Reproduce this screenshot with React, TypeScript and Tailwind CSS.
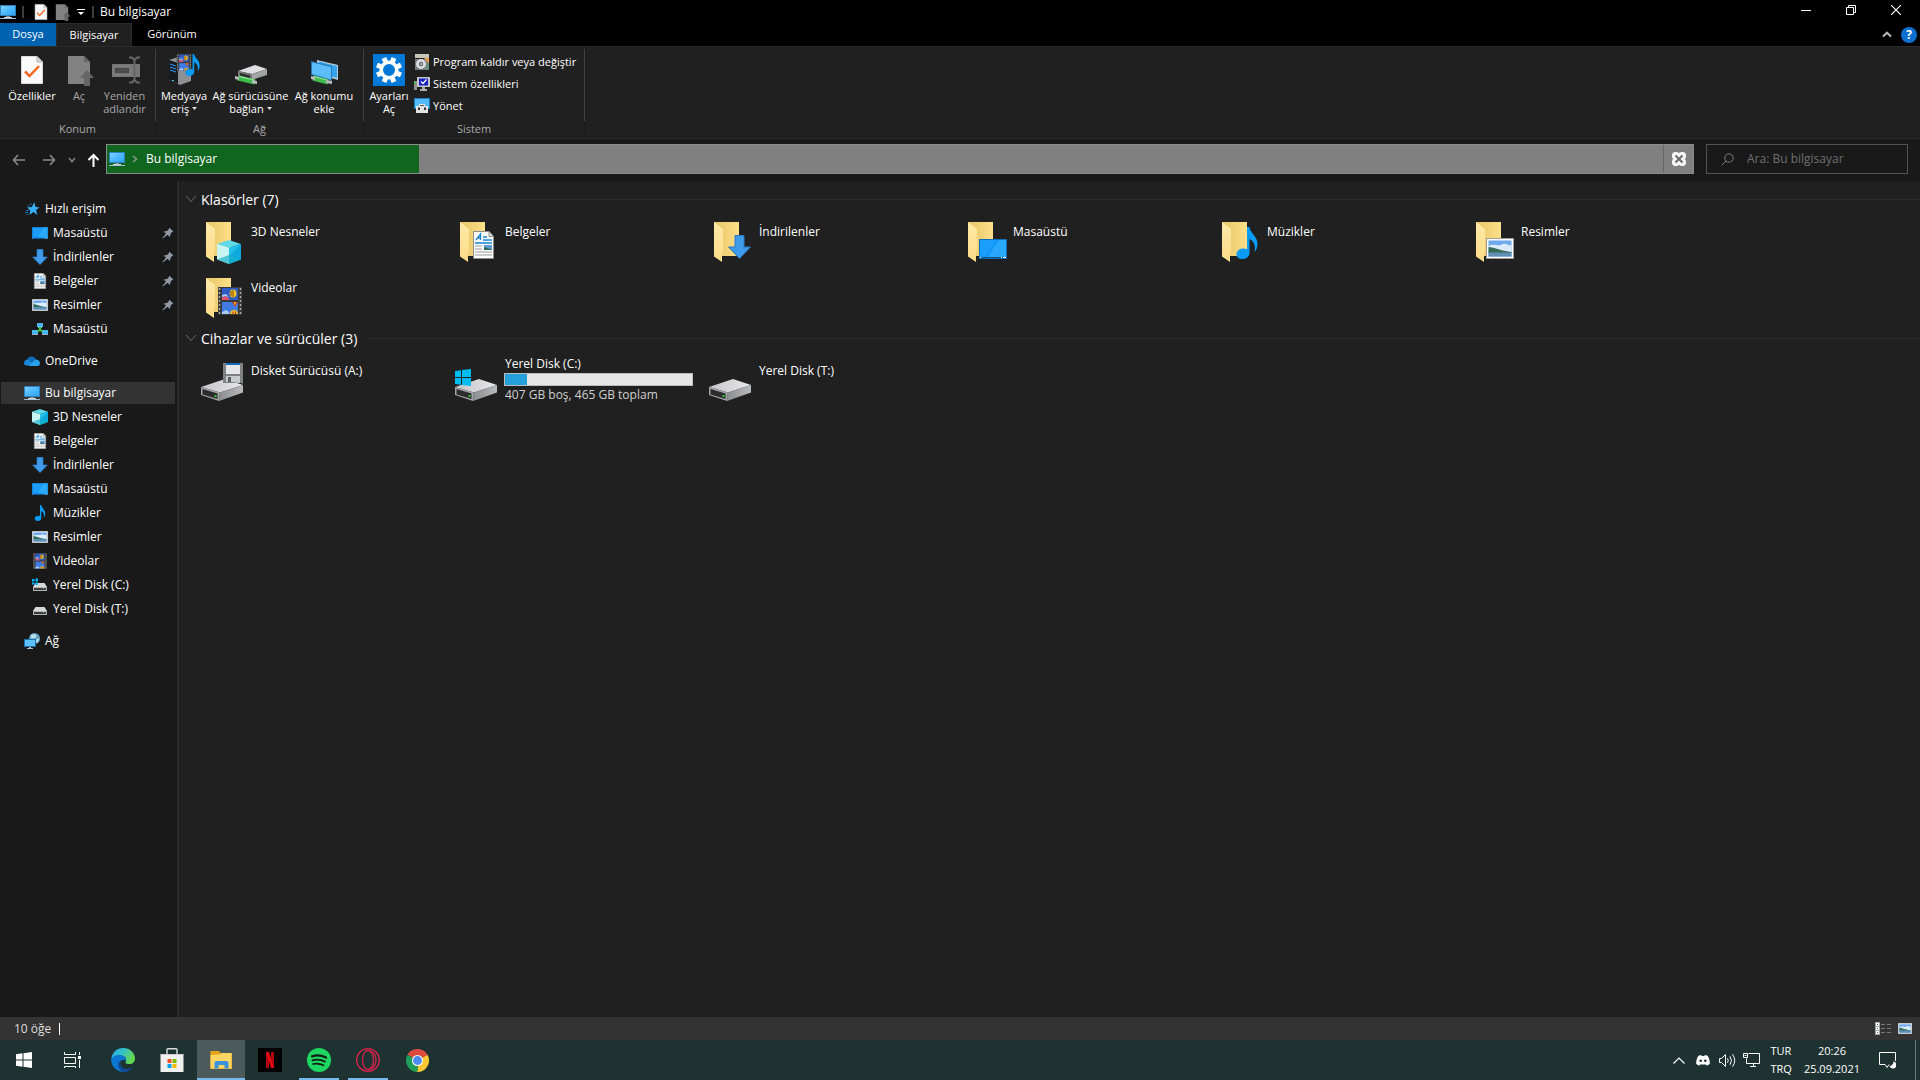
import type { ReactNode } from 'react'

type IconProps = { className?: string; x?: number; y?: number; width?: number; height?: number }

function PcIcon(p: IconProps) {
  return (
    <svg viewBox="0 0 16 16" {...p}>
      <defs>
        <linearGradient id="pc" x1="0" y1="0" x2="1" y2="1">
          <stop offset="0" stopColor="#7fd0ff" />
          <stop offset="0.5" stopColor="#4db8fd" />
          <stop offset="1" stopColor="#2ba6f5" />
        </linearGradient>
      </defs>
      <rect x="0" y="1" width="16" height="11" fill="#2f80b8" />
      <rect x="1" y="2" width="14" height="9" fill="url(#pc)" />
      <rect x="6" y="12" width="4" height="2" fill="#7c8b96" />
      <rect x="0" y="14" width="16" height="1" fill="#a9bccb" />
      <rect x="4" y="13" width="8" height="1" fill="#cfd8df" />
    </svg>
  )
}

function CubeIcon(p: IconProps) {
  return (
    <svg viewBox="0 0 24 24" {...p}>
      <path d="M12 0 24 4 12 8 0 4Z" fill="#5fd8e8" />
      <path d="M0 4 12 8V24L0 19.500Z" fill="#c9f4f4" />
      <path d="M24 4 12 8V24L24 19.500Z" fill="#0ea9dc" />
      <path d="M24 4 12 8V16Z" fill="#22bfe6" />
      <path d="M12 15 24 19.500 12 24 0 19.500Z" fill="#19b5cc" fillOpacity="0.7" />
    </svg>
  )
}

function DocIcon(p: IconProps) {
  return (
    <svg viewBox="0 0 21 28" {...p}>
      <path d="M0.500 0.500H16L20.500 5.500V27.500H0.500Z" fill="#fcfcfc" stroke="#8d8d8d" />
      <path d="M16 0.500V5.500H20.500" fill="#dcdcdc" stroke="#8d8d8d" />
      <path d="M3 9 7.500 3V9M4.500 7H7.500M10 6H14M10 9H19" fill="none" stroke="#1a86d0" strokeWidth="1.300" />
      <path d="M2 12H19" stroke="#1a86d0" strokeWidth="1.500" />
      <rect x="11" y="14" width="8" height="5" fill="#5f9bd0" />
      <path d="M11 16 19 18.500V19H11Z" fill="#2f6a55" />
      <path d="M2 15H9M2 18H9M2 21H19M2 24H19" stroke="#9c9c9c" />
    </svg>
  )
}

function DownIcon(p: IconProps) {
  return (
    <svg viewBox="0 0 23 24" {...p}>
      <path d="M7 0.500H16V12H22.500L11.500 23.500 0.500 12H7Z" fill="#3d9bea" stroke="#2a78c4" />
    </svg>
  )
}

function DesktopIcon(p: IconProps) {
  return (
    <svg viewBox="0 0 28 20" preserveAspectRatio="none" {...p}>
      <rect width="28" height="20" fill="#0b6fbd" />
      <rect x="1" y="1" width="26" height="17" fill="#1a9dfb" />
      <path d="M18 1H27V18H10Z" fill="#2aa8fc" />
      <path d="M18 1H20L8 18H6Z" fill="#0f97fa" />
      <rect x="1" y="18" width="26" height="1" fill="#0a4f86" />
      <path d="M1 18.500H2M22 18.500H23M24 18.500H27" stroke="#fff" />
    </svg>
  )
}

function NoteIcon(p: IconProps) {
  return (
    <svg viewBox="0 0 22 32" {...p}>
      <path
        d="M11 0H13.500C14 6 21.500 9 21.500 17C21.500 20 20.500 23 18.500 25C20 18 17.500 14 13.500 12V26C13.500 29.500 10.500 32 6.500 32C2.500 32 0.500 30 0.500 27C0.500 23.500 4 21.500 7.500 21.500C9 21.500 10.200 21.800 11 22.300Z"
        fill="#0a9bf5"
      />
    </svg>
  )
}

function PictureIcon(p: IconProps) {
  return (
    <svg viewBox="0 0 28 21" preserveAspectRatio="none" {...p}>
      <rect width="28" height="21" fill="#9b9b9b" />
      <rect x="1" y="1" width="26" height="19" fill="#fdfdfd" />
      <rect x="2.500" y="2.500" width="23" height="16" fill="#6fa8ee" />
      <path d="M2.500 8C8 5 12 9 17 6 20 5 23 8 25.500 7V14H2.500Z" fill="#dcebfa" />
      <path d="M2.500 9C7 9 12 12 25.500 14V15H2.500Z" fill="#356b57" />
      <path d="M2.500 14.500H25.500V18.500H2.500Z" fill="#5f8fb4" />
    </svg>
  )
}

function FilmIcon(p: IconProps) {
  return (
    <svg viewBox="0 0 24 28" {...p}>
      <rect width="24" height="28" fill="#3a3a3a" />
      <path d="M1.500 1V27M22.500 1V27" stroke="#a9a9a9" strokeWidth="1.500" strokeDasharray="2 2" />
      <rect x="4" y="1" width="16" height="12" fill="#2f5cc4" />
      <rect x="4" y="15" width="16" height="12" fill="#3f7be0" />
      <path d="M4 10 7 9 11 11V13H4Z" fill="#e2526a" />
      <path d="M4 8 8 7 11 10 7 9 4 10Z" fill="#a9cbf6" />
      <ellipse cx="15" cy="6.500" rx="3.500" ry="4" fill="#f2c01f" />
      <path d="M15 3V10M13 4V9" stroke="#7d4a1c" />
      <path d="M14 15H20L17 20Z" fill="#c23a28" />
      <path d="M16 15H18L17 19Z" fill="#f2c01f" />
      <path d="M4 25 8 23 11 25V27H4Z" fill="#a9cbf6" />
      <path d="M12 27A4 4 0 0 1 20 27Z" fill="#f2c01f" />
      <path d="M15 24.500V27M17.500 24.500V27" stroke="#b5271f" />
    </svg>
  )
}

function SmallDriveIcon({ windows, className }: { windows?: boolean; className?: string }) {
  return (
    <svg viewBox="0 0 16 16" className={className}>
      <path d="M3.500 6H12.500L15 10H1Z" fill="#d9d9d9" />
      <rect x="1" y="10" width="14" height="4" fill="#b5b5b5" />
      <rect x="2" y="11" width="12" height="2" fill="#3c3c3c" />
      <rect x="11" y="11" width="1" height="1" fill="#41e04a" />
      {windows && <path d="M0 2H2.500V4.500H0ZM3.500 1.500H6V4.500H3.500ZM0 5.500H2.500V7.500H0ZM3.500 5.500H6V8H3.500Z" fill="#00b7f1" />}
    </svg>
  )
}

function DriveShape() {
  return (
    <>
      <defs>
        <linearGradient id="dtop" x1="0" y1="0" x2="1" y2="0">
          <stop offset="0" stopColor="#c4c4c7" />
          <stop offset="1" stopColor="#e9e9ec" />
        </linearGradient>
        <linearGradient id="dside" x1="0" y1="0" x2="1" y2="0">
          <stop offset="0" stopColor="#8c8d8f" />
          <stop offset="1" stopColor="#b9babc" />
        </linearGradient>
      </defs>
      <path d="M1 30 25 22 43 28 20 35.500Z" fill="url(#dtop)" />
      <path d="M20 35.500 43 28V35.500L19 44Z" fill="url(#dside)" />
      <path d="M1 30 20 35.500 19 44 1 38Z" fill="#a3a4a6" />
      <path d="M2.500 32 17.500 36.500V42L2.500 37.500Z" fill="#2b2b2b" />
      <rect x="14.500" y="38" width="2" height="2" fill="#2fd03a" />
    </>
  )
}

function DriveIcon({ children }: { children?: ReactNode }) {
  return (
    <svg viewBox="0 0 48 48" className="h-12 w-12 shrink-0">
      <DriveShape />
      {children}
    </svg>
  )
}

function FolderIcon({ children }: { children?: ReactNode }) {
  return (
    <svg viewBox="0 0 48 48" className="h-12 w-12 shrink-0">
      <defs>
        <linearGradient id="fback" x1="0" y1="0" x2="1" y2="0">
          <stop offset="0" stopColor="#e8c567" />
          <stop offset="1" stopColor="#fee089" />
        </linearGradient>
        <linearGradient id="ffront" x1="0" y1="0" x2="0" y2="1">
          <stop offset="0" stopColor="#ffeaa8" />
          <stop offset="1" stopColor="#fcdb86" />
        </linearGradient>
      </defs>
      <path d="M6 4H31V38H12Z" fill="url(#fback)" />
      <path d="M6 4 15 11V33L14 35V44L6 38.500Z" fill="url(#ffront)" />
      {children}
    </svg>
  )
}

function FloppyDriveIcon() {
  return (
    <DriveIcon>
      <path d="M23 6H43V27L41 26H23Z" fill="#7f8184" />
      <rect x="26" y="6" width="14" height="2" fill="#1368b8" />
      <rect x="26" y="8" width="14" height="9" fill="#e7e7ea" />
      <path d="M26 19H40V26L33 25H26Z" fill="#c9cacd" />
      <rect x="28" y="20" width="3" height="5" fill="#5b5d60" />
    </DriveIcon>
  )
}

function SystemDriveIcon() {
  return (
    <DriveIcon>
      <path d="M1 14 7 13.200V20H1ZM8 13 17 12V20H8ZM1 21H7V27.800L1 27ZM8 21H17V29L8 28Z" fill="#00bcf2" />
    </DriveIcon>
  )
}

function StarIcon() {
  return (
    <svg viewBox="0 0 16 16" className="h-4 w-4">
      <path d="M10.500 1 11.300 5.800 15.500 6.500 12 9 13.500 14 9.300 11 5.500 14 6.300 9.500 3 6.500 7.800 6Z" fill="#38b0f7" />
      <path d="M6 3H8M3.500 5H6M2 9.500H5M1 11.500H4.500M2.500 13.500H4" stroke="#1d6ea8" />
    </svg>
  )
}

function NetFolderIcon() {
  return (
    <svg viewBox="0 0 16 16" className="h-4 w-4">
      <rect x="5" y="2" width="6" height="4" fill="#4db4f2" />
      <rect x="0" y="9" width="6" height="4" fill="#4db4f2" />
      <rect x="10" y="9" width="6" height="4" fill="#4db4f2" />
      <path d="M7 6H9V8L11 10 10 11.500 8 10 6 11.500 5 10 7 8Z" fill="#3cc24a" />
      <path d="M0 13.500H6M10 13.500H16M6 6.500H7M9 6.500H10" stroke="#9fb5c6" />
    </svg>
  )
}

function CloudIcon() {
  return (
    <svg viewBox="0 0 16 16" className="h-4 w-4">
      <path d="M3 6.500A5 5 0 0 1 12 6L8 11H2Z" fill="#0f6cbd" />
      <path d="M0 10.500C0 8 1.500 6.500 4 6.500L11 12.500H2.500C1 12.500 0 11.800 0 10.500Z" fill="#1a86dc" />
      <path d="M5 12.800 11.500 6.500C14.500 6.500 16 8.500 16 10.200C16 12 15 13 13.500 13H4Z" fill="#27a1ec" />
    </svg>
  )
}

function NetworkIcon() {
  return (
    <svg viewBox="0 0 16 16" className="h-4 w-4">
      <circle cx="10.500" cy="5.500" r="5.500" fill="#5fa3c4" />
      <path d="M7 2C9 0 12 1 12.500 3S9 6 7 5ZM12.500 6 15.500 5.500 14 9 12 9.500Z" fill="#b9e0ee" />
      <rect x="0" y="6" width="12" height="8" fill="#1f6fa8" />
      <rect x="1" y="7" width="10" height="6" fill="#5cc0ff" />
      <path d="M3 15.500H9M5 14.500H7" stroke="#a9bccb" />
    </svg>
  )
}

function PinIcon() {
  return (
    <svg viewBox="0 0 12 12" className="h-3 w-3">
      <path d="M7 0.500 11.500 4.500 10 5 8.500 7 8 10 5.500 7.800 1 11.500 0.500 11 4 6.500 1.500 4.500 5 4 7 2Z" fill="#8f99a3" />
    </svg>
  )
}

function CheckDocIcon({ className }: IconProps) {
  return (
    <svg viewBox="0 0 32 32" className={className}>
      <path d="M5.500 2.500H21L26.500 8V29.500H5.500Z" fill="#fafafa" stroke="#dadada" />
      <path d="M21 2.500V8H26.500" fill="#d5d5d5" stroke="#b4b4b4" />
      <path d="M9 17.500 13.500 22 23 12" fill="none" stroke="#f26522" strokeWidth="2.500" />
    </svg>
  )
}

function GrayDocIcon({ className }: IconProps) {
  return (
    <svg viewBox="0 0 32 32" className={className}>
      <path d="M5 2H21L27 8V30H5Z" fill="#828282" />
      <path d="M21 2V8H27" fill="#666" />
      <path d="M24 16 31 24H27V32H21V24H17Z" fill="#666" />
    </svg>
  )
}

function RenameIcon() {
  return (
    <svg viewBox="0 0 32 32" className="h-8 w-8">
      <rect x="3" y="10" width="28" height="13" fill="#767676" />
      <rect x="5" y="13" width="16" height="7" fill="#4c4c4c" stroke="#8e8e8e" />
      <path d="M20 3.500H23L25.500 6 28 3.500H31M25.500 5V27M20 28.500H23L25.500 26 28 28.500H31" fill="none" stroke="#666" strokeWidth="2" />
    </svg>
  )
}

function MediaIcon() {
  return (
    <svg viewBox="0 0 32 32" className="h-8 w-8">
      <path d="M1 6 10 3 23 6V27L12 31 1 26Z" fill="#8e9093" />
      <path d="M1 6 10 9V30L1 26Z" fill="#17191c" />
      <path d="M2 10 8 12M2 13 8 15M2 16 8 18" stroke="#2b8ff0" strokeWidth="1.200" />
      <rect x="4" y="26" width="2" height="1" fill="#39d7f0" />
      <FilmIcon x={8} y={0} width={16} height={17} />
      <NoteIcon x={17} y={0} width={15} height={22} />
    </svg>
  )
}

function NetDriveIcon() {
  return (
    <svg viewBox="0 0 32 32" className="h-8 w-8">
      <path d="M3 17 20 11 32 15 17 20Z" fill="#e0e0e2" />
      <path d="M17 20 32 15V21L17 26Z" fill="#a2a3a5" />
      <path d="M3 17 17 20V26L3 22Z" fill="#77787a" />
      <path d="M5 19 15 21.500V24L5 21.500Z" fill="#2b2b2b" />
      <path d="M3 24 20 28" stroke="#3fba4c" strokeWidth="5" />
      <path d="M4 22.500 19 26" stroke="#93ea9a" />
      <path d="M0 22 4 23V26L0 25ZM17 26 22 27V30L17 29Z" fill="#b9bbbd" />
    </svg>
  )
}

function NetPlaceIcon() {
  return (
    <svg viewBox="0 0 32 32" className="h-8 w-8">
      <path d="M9 6 30 11V26L9 20Z" fill="#b9cddb" />
      <path d="M11 7.500 29 12V24L11 19Z" fill="#35a4ec" />
      <path d="M3 7 24 12V27L3 21Z" fill="#2678b4" />
      <path d="M4 8.500 23 13V25.500L4 20Z" fill="#5cbdfb" />
      <path d="M5 24 20 28" stroke="#3fba4c" strokeWidth="5" />
      <path d="M6 22.500 19 26" stroke="#93ea9a" />
      <path d="M3 22 7 23V26L3 25ZM18 26 24 27V30L18 29Z" fill="#b9bbbd" />
    </svg>
  )
}

function GearIcon() {
  return (
    <svg viewBox="0 0 32 32" className="h-8 w-8">
      <rect width="32" height="32" fill="#0078d7" />
      <circle cx="16" cy="16" r="7.800" fill="none" stroke="#fff" strokeWidth="3.600" />
      <g stroke="#fff" strokeWidth="5">
        <path d="M19.400 7.700 21 4M24.300 12.600 28 11M24.300 19.400 28 21M19.400 24.300 21 28M12.600 24.300 11 28M7.700 19.400 4 21M7.700 12.600 4 11M12.600 7.700 11 4" />
      </g>
    </svg>
  )
}

function UninstallIcon() {
  return (
    <svg viewBox="0 0 16 16" className="h-4 w-4">
      <path d="M1 0H15V4H1Z" fill="#c9c4b8" />
      <path d="M1 5H15V16H1Z" fill="#77787a" />
      <path d="M10 4H15V10Z" fill="#e89a4b" />
      <path d="M11 9H15V16H11Z" fill="#6b8f7c" />
      <circle cx="7" cy="10" r="5" fill="#d9dbde" />
      <circle cx="7" cy="10" r="2" fill="#3b3d40" />
      <circle cx="7" cy="10" r="1" fill="#e8e8e8" />
    </svg>
  )
}

function SystemPropsIcon() {
  return (
    <svg viewBox="0 0 16 16" className="h-4 w-4">
      <rect x="3" y="1" width="13" height="10" fill="#c6c7c9" />
      <rect x="5" y="2.500" width="9" height="7" fill="#1a1fc4" />
      <path d="M7 5.500 9 7.500 12.500 3.500" fill="none" stroke="#fff" strokeWidth="1.300" />
      <path d="M0 5H3V14H0Z" fill="#8f9193" />
      <rect x="0" y="6" width="2" height="2" fill="#3cc24a" />
      <path d="M8 11H11V13H13V15H6V13H8Z" fill="#a9abad" />
    </svg>
  )
}

function ManageIcon() {
  return (
    <svg viewBox="0 0 16 16" className="h-4 w-4">
      <rect y="0" width="16" height="11" fill="#1c7fc4" />
      <rect x="1" y="1" width="14" height="9" fill="#53b9f9" />
      <path d="M5 6H11V8H14V15H2V8H5Z" fill="#e3e3e3" />
      <rect x="6" y="7" width="4" height="1" fill="#555" />
      <path d="M4 9.500H6V12H4ZM10 9.500H12V12H10Z" fill="#333" />
    </svg>
  )
}

function RibbonButton({ icon, lines, width, disabled, menu }: {
  icon: ReactNode
  lines: string[]
  width: string
  disabled?: boolean
  menu?: boolean
}) {
  return (
    <button
      disabled={disabled}
      className={`flex flex-col items-center pt-[5px] ${width} ${disabled ? 'text-[#a6a6a6]' : 'text-white'}`}
    >
      {icon}
      <span className="mt-[3px] whitespace-nowrap text-center text-[11px] leading-[13px]">
        {lines.map((line, i) => (
          <span key={line} className="flex items-center justify-center gap-[3px]">
            {line}
            {menu && i === lines.length - 1 && (
              <svg viewBox="0 0 5 3" className="h-[3px] w-[5px]"><path d="M0 0H5L2.500 3Z" fill="#ddd" /></svg>
            )}
          </span>
        ))}
      </span>
    </button>
  )
}

function RibbonGroup({ label, className, children }: { label: string; className: string; children: ReactNode }) {
  return (
    <section className="flex flex-col">
      <div className={`mt-[2px] flex h-[72px] items-start border-r border-[#404040] ${className}`}>
        {children}
      </div>
      <div className="border-r border-[#1a1a1a] text-center text-[11px] leading-4 text-[#a9a9a9]">{label}</div>
    </section>
  )
}

function RibbonLink({ icon, label }: { icon: ReactNode; label: string }) {
  return (
    <button className="flex h-[22px] items-center gap-[3px] whitespace-nowrap">
      {icon}
      {label}
    </button>
  )
}

function TitleBar() {
  return (
    <header className="flex h-[23px] items-center bg-black">
      <PcIcon className="h-4 w-4" />
      <span className="ml-[6px] h-3 w-[2px] bg-[#3c3c3c]" />
      <button className="ml-[8px]" aria-label="Özellikler"><CheckDocIcon className="h-[18px] w-[18px]" /></button>
      <button className="ml-[3px]" aria-label="Yeni klasör"><GrayDocIcon className="h-[18px] w-[18px]" /></button>
      <button className="ml-[6px]" aria-label="Hızlı Erişim Araç Çubuğunu Özelleştir">
        <svg viewBox="0 0 8 8" className="h-2 w-2"><path d="M0 1H8V2H0ZM1 4H7L4 7Z" fill="#fff" /></svg>
      </button>
      <span className="ml-[7px] h-3 w-[2px] bg-[#3c3c3c]" />
      <h1 className="ml-[6px] text-[12px]">Bu bilgisayar</h1>
      <div className="ml-auto flex self-stretch pb-[3px] pr-[2px]">
        <button className="flex w-[45px] items-center justify-center" aria-label="Simge durumuna küçült">
          <svg viewBox="0 0 10 10" className="h-[10px] w-[10px]"><path d="M0 5.500H10" stroke="#fff" /></svg>
        </button>
        <button className="flex w-[45px] items-center justify-center" aria-label="Önceki boyut">
          <svg viewBox="0 0 10 10" className="h-[10px] w-[10px]" fill="none" stroke="#fff">
            <path d="M0.500 2.500H7.500V9.500H0.500ZM2.500 2.500V0.500H9.500V7.500H7.500" />
          </svg>
        </button>
        <button className="flex w-[45px] items-center justify-center" aria-label="Kapat">
          <svg viewBox="0 0 10 10" className="h-[10px] w-[10px]"><path d="M0 0 10 10M10 0 0 10" stroke="#fff" strokeWidth="1.200" /></svg>
        </button>
      </div>
    </header>
  )
}

function Tabs() {
  return (
    <nav className="flex h-[23px] bg-black text-[11px]">
      <button className="w-[56px] bg-[#0063b1]">Dosya</button>
      <button className="w-[76px] border-x border-t border-[#2b2b2b] bg-[#202020]">Bilgisayar</button>
      <button className="w-[80px]">Görünüm</button>
      <div className="ml-auto flex items-center gap-[9px] pr-[3px]">
        <button aria-label="Şeridi küçült">
          <svg viewBox="0 0 10 7" className="h-[7px] w-[10px]"><path d="M1 5.500 5 1.700 9 5.500" fill="none" stroke="#b4b4b4" strokeWidth="2.200" /></svg>
        </button>
        <button className="h-4 w-4 rounded-full bg-[#0b6fd0] text-[12px] font-bold leading-4">?</button>
      </div>
    </nav>
  )
}

function Ribbon() {
  return (
    <div className="flex h-[93px] border-y border-[#2b2b2b] bg-[#202020] text-[11px]">
      <RibbonGroup label="Konum" className="px-[2px]">
        <RibbonButton width="w-[60px]" icon={<CheckDocIcon className="h-8 w-8" />} lines={['Özellikler']} />
        <RibbonButton width="w-[34px]" disabled icon={<GrayDocIcon className="h-8 w-8" />} lines={['Aç']} />
        <RibbonButton width="w-[57px]" disabled icon={<RenameIcon />} lines={['Yeniden', 'adlandır']} />
      </RibbonGroup>
      <RibbonGroup label="Ağ" className="pl-[2px] pr-[6px]">
        <RibbonButton width="w-[52px]" menu icon={<MediaIcon />} lines={['Medyaya', 'eriş']} />
        <RibbonButton width="w-[81px]" menu icon={<NetDriveIcon />} lines={['Ağ sürücüsüne', 'bağlan']} />
        <RibbonButton width="w-[66px]" icon={<NetPlaceIcon />} lines={['Ağ konumu', 'ekle']} />
      </RibbonGroup>
      <RibbonGroup label="Sistem" className="pl-[2px] pr-[8px]">
        <RibbonButton width="w-[46px]" icon={<GearIcon />} lines={['Ayarları', 'Aç']} />
        <div className="flex flex-col pl-[2px] pt-[2px]">
          <RibbonLink icon={<UninstallIcon />} label="Program kaldır veya değiştir" />
          <RibbonLink icon={<SystemPropsIcon />} label="Sistem özellikleri" />
          <RibbonLink icon={<ManageIcon />} label="Yönet" />
        </div>
      </RibbonGroup>
    </div>
  )
}

function AddressRow() {
  return (
    <div className="flex h-[42px] items-center bg-[#191919] pr-3 text-[12px]">
      <div className="flex w-[106px] items-center pl-[12px]">
        <button aria-label="Geri">
          <svg viewBox="0 0 14 12" className="h-3 w-[14px]" fill="none" stroke="#8a8a8a" strokeWidth="1.600"><path d="M13 6H1.500M6 1 1.500 6 6 11" /></svg>
        </button>
        <button className="ml-[16px]" aria-label="İleri">
          <svg viewBox="0 0 14 12" className="h-3 w-[14px]" fill="none" stroke="#8a8a8a" strokeWidth="1.600"><path d="M1 6H12.500M8 1 12.500 6 8 11" /></svg>
        </button>
        <button className="ml-[12px]" aria-label="Son konumlar">
          <svg viewBox="0 0 8 6" className="h-[6px] w-2" fill="none" stroke="#7a7a7a" strokeWidth="1.800"><path d="M1 1 4 4.500 7 1" /></svg>
        </button>
        <button className="ml-[11px]" aria-label="Yukarı">
          <svg viewBox="0 0 13 14" className="h-[14px] w-[13px]" fill="none" stroke="#fff" strokeWidth="2"><path d="M6.500 14V2M1.500 7 6.500 2 11.500 7" /></svg>
        </button>
      </div>
      <div className="mb-[2px] flex h-[30px] flex-1 border border-[#8b8b8b] bg-[#808080]">
        <div className="flex w-[312px] items-center bg-[#10651f] pl-[2px]">
          <PcIcon className="h-4 w-4" />
          <svg viewBox="0 0 6 8" className="ml-[7px] h-2 w-[6px]" fill="none" stroke="#8a9a8a" strokeWidth="1.500"><path d="M1 1 4.500 4 1 7" /></svg>
          <button className="ml-[8px]">Bu bilgisayar</button>
        </div>
        <button className="ml-auto flex w-[30px] items-center justify-center border-l border-[#666]" aria-label="Durdur">
          <svg viewBox="0 0 14 14" className="h-[14px] w-[14px]">
            <path d="M2 0H5L7 1 9 0H12L14 2V5L13 7 14 9V12L12 14H9L7 13 5 14H2L0 12V9L1 7 0 5V2Z" fill="#f5f5f5" />
            <path d="M3.500 3.500 10.500 10.500M10.500 3.500 3.500 10.500" stroke="#6b6b6b" strokeWidth="2" />
          </svg>
        </button>
      </div>
      <label className="mb-[2px] ml-[12px] flex h-[30px] w-[202px] items-center border border-[#535353] pl-[14px]">
        <svg viewBox="0 0 13 13" className="h-[13px] w-[13px] shrink-0" fill="none" stroke="#7d7d7d">
          <circle cx="8" cy="5" r="4.200" />
          <path d="M5 8 0.500 12.500" />
        </svg>
        <input
          type="text"
          aria-label="Ara"
          placeholder="Ara: Bu bilgisayar"
          className="ml-[13px] w-full min-w-0 bg-transparent outline-none placeholder:text-[#6f6f6f]"
        />
      </label>
    </div>
  )
}

type NavItem = { label: string; icon: ReactNode; root?: boolean; pinned?: boolean; active?: boolean }

const small = 'h-4 w-4'

const navGroups: NavItem[][] = [
  [
    { label: 'Hızlı erişim', icon: <StarIcon />, root: true },
    { label: 'Masaüstü', icon: <DesktopIcon className="h-3 w-4" />, pinned: true },
    { label: 'İndirilenler', icon: <DownIcon className={small} />, pinned: true },
    { label: 'Belgeler', icon: <DocIcon className={small} />, pinned: true },
    { label: 'Resimler', icon: <PictureIcon className="h-3 w-4" />, pinned: true },
    { label: 'Masaüstü', icon: <NetFolderIcon /> },
  ],
  [{ label: 'OneDrive', icon: <CloudIcon />, root: true }],
  [
    { label: 'Bu bilgisayar', icon: <PcIcon className={small} />, root: true, active: true },
    { label: '3D Nesneler', icon: <CubeIcon className={small} /> },
    { label: 'Belgeler', icon: <DocIcon className={small} /> },
    { label: 'İndirilenler', icon: <DownIcon className={small} /> },
    { label: 'Masaüstü', icon: <DesktopIcon className="h-3 w-4" /> },
    { label: 'Müzikler', icon: <NoteIcon className={small} /> },
    { label: 'Resimler', icon: <PictureIcon className="h-3 w-4" /> },
    { label: 'Videolar', icon: <FilmIcon className={small} /> },
    { label: 'Yerel Disk (C:)', icon: <SmallDriveIcon windows className={small} /> },
    { label: 'Yerel Disk (T:)', icon: <SmallDriveIcon className={small} /> },
  ],
  [{ label: 'Ağ', icon: <NetworkIcon />, root: true }],
]

function Sidebar() {
  return (
    <aside className="flex w-[179px] shrink-0 flex-col gap-2 border-r-2 border-[#2b2b2b] bg-[#191919] pt-4 text-[12px]">
      {navGroups.map((group, i) => (
        <ul key={i}>
          {group.map((item) => (
            <li key={item.label + (item.pinned ? '-pin' : '')} className="flex h-6 items-center pl-px pr-[2px]">
              <button
                className={`flex h-[22px] flex-1 items-center gap-[5px] ${item.root ? 'pl-[23px]' : 'pl-[31px]'} ${item.active ? 'bg-[#333333]' : ''}`}
              >
                {item.icon}
                {item.label}
                {item.pinned && <span className="ml-auto pr-px"><PinIcon /></span>}
              </button>
            </li>
          ))}
        </ul>
      ))}
    </aside>
  )
}

function SectionHeader({ title }: { title: string }) {
  return (
    <div className="mb-[3px] flex h-6 items-center pl-[6px]">
      <svg viewBox="0 0 12 8" className="h-2 w-3" fill="none" stroke="#6b6b6b"><path d="M1 1 6 6.500 11 1" /></svg>
      <h2 className="ml-[4px] text-[14px]">{title}</h2>
      <span className="ml-2 h-px flex-1 bg-[#2b2b2b]" />
    </div>
  )
}

function Tile({ icon, label }: { icon: ReactNode; label: string }) {
  return (
    <button className="flex h-14 items-start gap-[3px] pl-[4px] pt-[4px] text-left">
      {icon}
      <span className="pt-[6px] leading-4">{label}</span>
    </button>
  )
}

function DiskTile({ label, free, used }: { label: string; free: string; used: number }) {
  return (
    <button className="flex h-14 items-start pl-[4px] pt-[4px] text-left">
      <SystemDriveIcon />
      <span className="flex w-[191px] flex-col gap-px pl-[2px]">
        <span className="-mt-px pl-[1px] leading-4">{label}</span>
        <span className="h-[13px] border border-[#bcbcbc] bg-[#e6e6e6]">
          <span className="block h-full bg-[#26a0da]" style={{ width: `${used}%` }} />
        </span>
        <span className="pl-[1px] leading-4 text-[#d0d0d0]">{free}</span>
      </span>
    </button>
  )
}

function FileArea() {
  return (
    <main className="min-w-0 flex-1 bg-[#202020] pt-[6px] text-[12px]">
      <SectionHeader title="Klasörler (7)" />
      <div className="grid grid-cols-[repeat(auto-fill,254px)] pl-[17px]">
        <Tile label="3D Nesneler" icon={<FolderIcon><CubeIcon x={17} y={22} width={24} height={24} /></FolderIcon>} />
        <Tile label="Belgeler" icon={<FolderIcon><DocIcon x={19} y={13} width={21} height={28} /></FolderIcon>} />
        <Tile label="İndirilenler" icon={<FolderIcon><DownIcon x={20} y={17} width={23} height={24} /></FolderIcon>} />
        <Tile label="Masaüstü" icon={<FolderIcon><DesktopIcon x={17} y={21} width={28} height={20} /></FolderIcon>} />
        <Tile label="Müzikler" icon={<FolderIcon><NoteIcon x={20} y={9} width={22} height={32} /></FolderIcon>} />
        <Tile label="Resimler" icon={<FolderIcon><PictureIcon x={16} y={20} width={28} height={21} /></FolderIcon>} />
        <Tile label="Videolar" icon={<FolderIcon><FilmIcon x={18} y={13} width={24} height={28} /></FolderIcon>} />
      </div>
      <SectionHeader title="Cihazlar ve sürücüler (3)" />
      <div className="grid grid-cols-[repeat(auto-fill,254px)] pl-[17px]">
        <Tile label="Disket Sürücüsü (A:)" icon={<FloppyDriveIcon />} />
        <DiskTile label="Yerel Disk (C:)" free="407 GB boş, 465 GB toplam" used={12} />
        <Tile label="Yerel Disk (T:)" icon={<DriveIcon />} />
      </div>
    </main>
  )
}

function StatusBar() {
  return (
    <footer className="flex h-[23px] items-center bg-[#333333] pl-[14px] pr-2 text-[12px]">
      <span className="text-[#dedede]">10 öğe</span>
      <span className="ml-[8px] h-3 w-px bg-white" />
      <button className="ml-auto" aria-label="Ayrıntılar">
        <svg viewBox="0 0 16 13" className="h-[13px] w-4">
          <path d="M0 0H5V13H0Z" fill="#a8a8a8" />
          <path d="M1 1H4V4H1ZM1 5H4V8H1ZM1 9H4V12H1Z" fill="#fff" />
          <path d="M2 2H3V3H2ZM2 6H3V7H2Z" fill="#3a6fa8" />
          <path d="M2 10H3V11H2Z" fill="#c0392b" />
          <path d="M6 2.500H10M12 2.500H16M6 6.500H10M12 6.500H16M6 10.500H10M12 10.500H16" stroke="#777" />
        </svg>
      </button>
      <button className="ml-[7px]" aria-label="Büyük simgeler"><PictureIcon className="h-[11px] w-[14px]" /></button>
    </footer>
  )
}

function TaskButton({ label, active, running, children }: { label: string; active?: boolean; running?: boolean; children: ReactNode }) {
  return (
    <button
      aria-label={label}
      className={`flex h-10 w-12 flex-col items-center ${active ? 'bg-[#4b5b5b]' : ''}`}
    >
      <span className="flex flex-1 items-center">{children}</span>
      {active && <span className="h-[2px] w-full bg-[#76b9ed]" />}
      {running && <span className="h-[2px] w-10 bg-[#76b9ed]" />}
      {!active && !running && <span className="h-[2px]" />}
    </button>
  )
}

function Taskbar() {
  return (
    <div className="flex h-10 items-stretch bg-[#1e3231]">
      <div className="flex pr-[3px]">
        <TaskButton label="Başlat">
          <svg viewBox="0 0 16 16" className="mt-[2px] h-4 w-4"><path d="M0 2.200 6.500 1.300V7.500H0ZM7.500 1.200 16 0V7.500H7.500ZM0 8.500H6.500V14.700L0 13.800ZM7.500 8.500H16V16L7.500 14.800Z" fill="#fff" /></svg>
        </TaskButton>
        <TaskButton label="Görev görünümü">
          <svg viewBox="0 0 17 16" className="mt-[2px] h-4 w-[17px]" fill="none" stroke="#fff">
            <path d="M0.500 0V2.500H11.500V0M0.500 5.500H11.500V11.500H0.500ZM0.500 16V14.500H11.500V16M15.500 0V3M15.500 8V16" />
            <rect x="14" y="4" width="3" height="3" fill="#fff" stroke="none" />
          </svg>
        </TaskButton>
      </div>
      <div className="flex gap-px">
        <TaskButton label="Microsoft Edge">
          <svg viewBox="0 0 24 24" className="mt-[2px] h-6 w-6">
            <defs>
              <linearGradient id="edgeTop" x1="0" y1="0" x2="1" y2="0.400">
                <stop offset="0" stopColor="#2aa9e8" />
                <stop offset="0.500" stopColor="#35c1c9" />
                <stop offset="1" stopColor="#62d94f" />
              </linearGradient>
            </defs>
            <path d="M0.500 10C1.500 4 6 0 12 0C19 0 24 5 24 10.500C24 14 21.500 16 18.500 16C16 16 14 15.200 14.500 14.200C16.500 11.500 14.500 7.500 9.500 7.500C5 7.500 1.500 9.500 0.500 12Z" fill="url(#edgeTop)" />
            <path d="M0.200 11C1.500 8.500 5 6.800 9 7C13 7.300 15.500 10 14.800 13C13.500 11.500 11.500 11.500 10 12.500C8 14.500 9 20 16 23.200A12 12 0 0 1 0.200 11Z" fill="#0c78d4" />
            <path d="M9.500 12.800C8 16 10 20.500 15.500 21C18.500 21.200 20.500 20 22.300 18.500C20 22.500 16 24.300 12 24C8 22 6 17.500 7.500 14.500C8 13.500 8.800 12.900 9.500 12.800Z" fill="#124a9a" />
          </svg>
        </TaskButton>
        <TaskButton label="Microsoft Store">
          <svg viewBox="0 0 24 24" className="mt-[2px] h-6 w-6">
            <path d="M7 6.500V1.500Q7 0.700 8 0.700H16Q17 0.700 17 1.500V6.500" fill="none" stroke="#d9dede" strokeWidth="1.400" />
            <path d="M0.500 6H23.500V24H0.500Z" fill="#f0f0f0" />
            <path d="M0.500 6H23.500V7H0.500Z" fill="#cfcfcf" />
            <path d="M7.500 11H11.500V15H7.500Z" fill="#f25022" />
            <path d="M12.500 11H16.500V15H12.500Z" fill="#7fba00" />
            <path d="M7.500 16H11.500V20H7.500Z" fill="#00a4ef" />
            <path d="M12.500 16H16.500V20H12.500Z" fill="#ffb900" />
          </svg>
        </TaskButton>
        <TaskButton label="Dosya Gezgini" active>
          <svg viewBox="0 0 22 18" className="mt-[2px] h-[18px] w-[22px]">
            <path d="M0.500 0H9L10.500 2H22V18H0.500Z" fill="#e2a41b" />
            <path d="M0.500 4 10 3.500 11.500 2H21.500V17.500H0.500Z" fill="#ffd566" />
            <path d="M4.500 17.500V12Q4.500 10 6.500 10H16.500Q18.500 10 18.500 12V17.500H14.500V14H8.500V17.500Z" fill="#3a92dd" />
          </svg>
        </TaskButton>
        <TaskButton label="Netflix">
          <svg viewBox="0 0 24 24" className="mt-[2px] h-6 w-6">
            <rect width="24" height="24" fill="#000" />
            <rect x="8" y="4" width="3" height="16" fill="#b1060f" />
            <rect x="13" y="4" width="3" height="16" fill="#b1060f" />
            <path d="M8 4H11L16 20H13Z" fill="#e50914" />
          </svg>
        </TaskButton>
        <TaskButton label="Spotify" running>
          <svg viewBox="0 0 24 24" className="mt-[2px] h-6 w-6" fill="none" stroke="#101c16" strokeLinecap="round">
            <circle cx="12" cy="12" r="12" fill="#1ed760" stroke="none" />
            <path d="M5 8.300C9.500 7 15 7.400 19 9.600" strokeWidth="2.300" />
            <path d="M5.500 12.300C9.500 11.200 14 11.600 17.800 13.600" strokeWidth="1.900" />
            <path d="M6 16C9.500 15.200 13 15.500 16.500 17.300" strokeWidth="1.600" />
          </svg>
        </TaskButton>
        <TaskButton label="Opera GX" running>
          <svg viewBox="0 0 24 24" className="mt-[2px] h-6 w-6" fill="none" stroke="#e0224e">
            <circle cx="12" cy="12" r="11.300" strokeWidth="1.300" />
            <ellipse cx="12" cy="12" rx="5.500" ry="9.500" strokeWidth="1.200" />
            <path d="M9 3.500C14 0.500 20 5 20 12S14 23.500 9 20.500" strokeWidth="1.200" />
          </svg>
        </TaskButton>
        <TaskButton label="Google Chrome">
          <svg viewBox="0 0 24 24" className="mt-[2px] h-[23px] w-[23px]">
            <path d="M12 12 1.600 6A12 12 0 0 1 22.400 6Z" fill="#dd4b3e" />
            <path d="M12 12 22.400 6A12 12 0 0 1 12 24Z" fill="#fcc934" />
            <path d="M12 12V24A12 12 0 0 1 1.600 6Z" fill="#1e9e58" />
            <path d="M12 6.500H22.700L22.400 6H12Z" fill="#dd4b3e" />
            <path d="M16.800 14.700 11.300 24H12L17 15Z" fill="#fcc934" />
            <circle cx="12" cy="12" r="5.800" fill="#f4f4f4" />
            <circle cx="12" cy="12" r="4.600" fill="#4a8af4" />
          </svg>
        </TaskButton>
      </div>
      <div className="ml-auto flex items-center text-[11px]">
        <button aria-label="Gizli simgeleri göster">
          <svg viewBox="0 0 12 7" className="h-[7px] w-3" fill="none" stroke="#fff" strokeWidth="1.200"><path d="M0.500 6.500 6 1 11.500 6.500" /></svg>
        </button>
        <button className="ml-[11px]" aria-label="Discord">
          <svg viewBox="0 0 14 11" className="h-[11px] w-[14px]">
            <path d="M2.500 0.800 5 0 5.800 0.900H8.200L9 0 11.500 0.800C13.200 3.200 14 6 13.800 9L10.800 10.800 10 9.500H4L3.200 10.800 0.200 9C0 6 0.800 3.200 2.500 0.800Z" fill="#fff" />
            <circle cx="4.700" cy="5.800" r="1.300" fill="#1e3231" />
            <circle cx="9.300" cy="5.800" r="1.300" fill="#1e3231" />
          </svg>
        </button>
        <button className="ml-[9px]" aria-label="Ses">
          <svg viewBox="0 0 17 15" className="h-[15px] w-[17px]" fill="none" stroke="#fff">
            <path d="M0.500 5.500H2.500L6.500 1.500V13.500L2.500 9.500H0.500Z" />
            <path d="M8.500 5.300Q10 7.500 8.500 9.700M11 3.300Q14 7.500 11 11.700M13.500 1.300Q18 7.500 13.500 13.700" />
          </svg>
        </button>
        <button className="ml-[7px]" aria-label="Ağ">
          <svg viewBox="0 0 17 14" className="h-[14px] w-[17px]" fill="none" stroke="#fff">
            <path d="M5.500 0.500H16.500V10.500H3.500V5.500M10.500 10.500V13M7 13.500H13" />
            <path d="M0.500 0.500H4.500V4.500H0.500ZM1.500 2.500H3.500" />
          </svg>
        </button>
        <button className="ml-[10px] text-left leading-[18px]">
          <span className="block">TUR</span>
          <span className="block">TRQ</span>
        </button>
        <button className="ml-[12px] text-center leading-[18px]">
          <span className="block">20:26</span>
          <span className="block">25.09.2021</span>
        </button>
        <button className="ml-[19px]" aria-label="Bildirimler">
          <svg viewBox="0 0 17 17" className="h-[17px] w-[17px]" fill="none" stroke="#fff">
            <path d="M10 12.500 8 15.500 6 12.500H0.500V0.500H16.500V9" />
            <path d="M14.500 9.500A3.500 3.500 0 1 1 10.500 14 4.500 4.500 0 0 0 14.500 9.500Z" fill="#fff" stroke="none" />
          </svg>
        </button>
        <button className="ml-[19px] h-full w-[5px] border-l border-[#6d7b7a]" aria-label="Masaüstünü göster" />
      </div>
    </div>
  )
}

export default function App() {
  return (
    <div className="flex min-h-screen flex-col bg-[#202020] font-['Open_Sans','Noto_Sans',sans-serif] text-white">
      <TitleBar />
      <Tabs />
      <Ribbon />
      <AddressRow />
      <div className="flex flex-1">
        <Sidebar />
        <FileArea />
      </div>
      <StatusBar />
      <Taskbar />
    </div>
  )
}
